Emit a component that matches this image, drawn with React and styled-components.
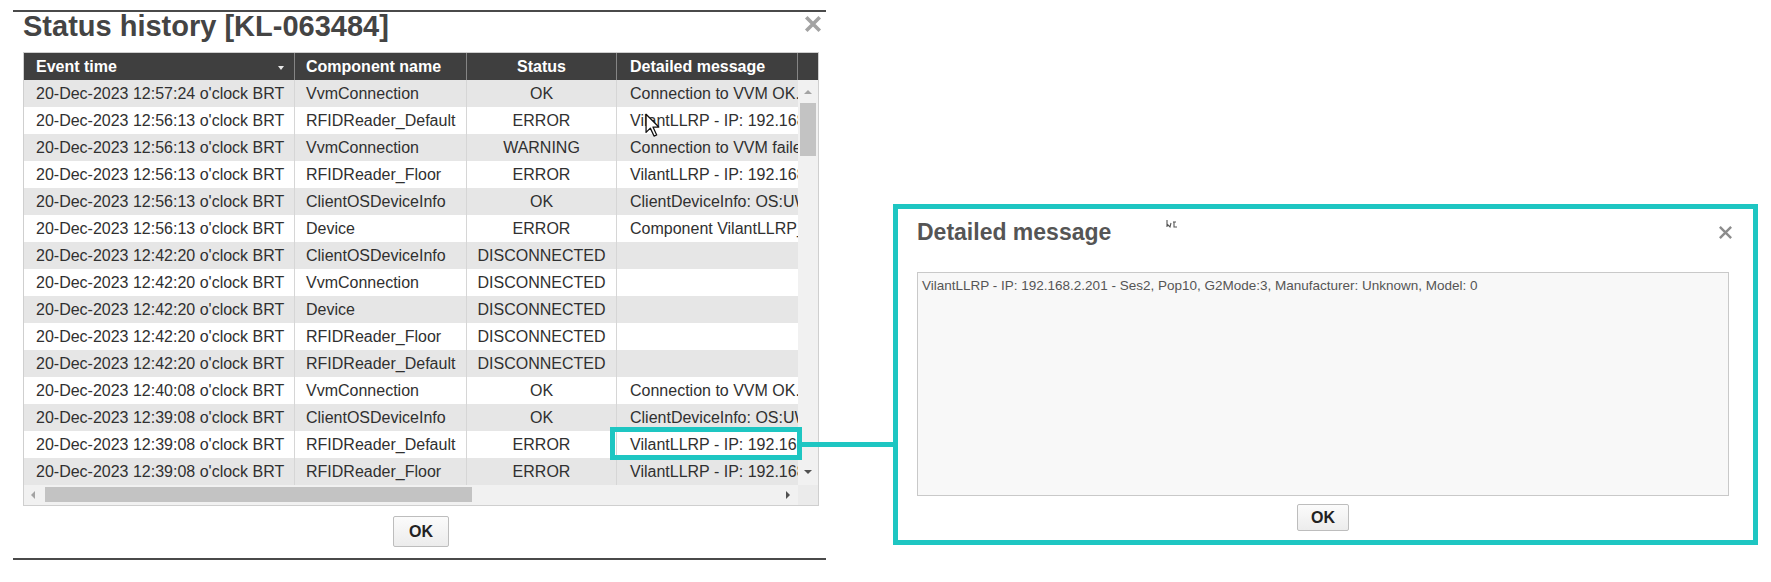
import React from 'react';
import styled, { createGlobalStyle } from 'styled-components';

const Global = createGlobalStyle`
  html, body { margin: 0; padding: 0; background: #ffffff; }
  body { font-family: "Liberation Sans", Arial, sans-serif; }
  * { box-sizing: border-box; }
`;

const CYAN = '#1ec6c2';

const Page = styled.div`
  position: relative;
  width: 1771px;
  height: 582px;
  display: flex;
  align-items: flex-start;
  padding: 10px 0 0 13px;
  overflow: hidden;
`;

const Dialog = styled.section`
  width: 813px;
  border-top: 2px solid #4a4a4a;
  border-bottom: 2px solid #4a4a4a;
  padding: 0 7px 11px 10px;
  display: flex;
  flex-direction: column;
`;

const TitleRow = styled.div`
  height: 28px;
  margin-bottom: 12px;
  display: flex;
  align-items: center;
  justify-content: space-between;
`;

const Title = styled.h1`
  margin: 0;
  font-size: ${p => p.$size}px;
  line-height: 28px;
  font-weight: bold;
  color: ${p => p.$color};
  white-space: nowrap;
`;

const CloseIcon = ({ size, color, stroke }) => (
  <svg width={size} height={size} viewBox="0 0 16 16">
    <path d="M2 2 L14 14 M14 2 L2 14" stroke={color} strokeWidth={stroke} strokeLinecap="butt" />
  </svg>
);

const CloseButton = styled.span`
  display: flex;
  align-items: center;
  justify-content: center;
  margin-right: ${p => p.$right}px;
  margin-top: ${p => p.$top}px;
`;

const Frame = styled.div`
  border: 1px solid #cfcfcf;
  background: #f1f1f1;
  display: flex;
  flex-direction: column;
`;

const COLS = '271px 172px 150px 181px';

const HeaderRow = styled.div`
  display: grid;
  grid-template-columns: ${COLS} 20px;
  height: 27px;
  background: #3f3f3f;
`;

const HeaderCell = styled.div`
  position: relative;
  color: #ffffff;
  font-weight: bold;
  font-size: 16px;
  line-height: 27px;
  padding-left: ${p => (p.$center ? 0 : p.$pad)}px;
  text-align: ${p => (p.$center ? 'center' : 'left')};
  border-right: ${p => (p.$last ? 'none' : '1px solid #858585')};
  white-space: nowrap;
  overflow: hidden;
`;

const SortArrow = styled.span`
  position: absolute;
  right: 10px;
  top: 13px;
  width: 0;
  height: 0;
  border-left: 3.5px solid transparent;
  border-right: 3.5px solid transparent;
  border-top: 4px solid #e8e8e8;
`;

const BodyWrap = styled.div`
  display: flex;
`;

const Rows = styled.div`
  width: 774px;
  display: flex;
  flex-direction: column;
`;

const Row = styled.div`
  display: grid;
  grid-template-columns: ${COLS};
  height: 27px;
  background: ${p => (p.$alt ? '#e6e6e6' : '#ffffff')};
`;

const Cell = styled.div`
  font-size: 16px;
  line-height: 27px;
  color: #303030;
  white-space: nowrap;
  overflow: hidden;
  padding-left: ${p => (p.$center ? 0 : p.$pad)}px;
  text-align: ${p => (p.$center ? 'center' : 'left')};
  border-right: ${p => (p.$last ? 'none' : '1px solid #d6d6d6')};
`;

const VScroll = styled.div`
  position: relative;
  width: 20px;
  background: #f1f1f1;
`;

const VThumb = styled.div`
  position: absolute;
  left: 2px;
  top: 23px;
  width: 16px;
  height: 53px;
  background: #c3c3c3;
`;

const Arrow = styled.span`
  position: absolute;
  width: 0;
  height: 0;
  ${p => p.$dir === 'up' && `
    left: 6px; top: 10px;
    border-left: 4px solid transparent; border-right: 4px solid transparent;
    border-bottom: 4px solid #a3a3a3;
  `}
  ${p => p.$dir === 'down' && `
    left: 6px; bottom: 11px;
    border-left: 4px solid transparent; border-right: 4px solid transparent;
    border-top: 4px solid #505050;
  `}
  ${p => p.$dir === 'left' && `
    left: 7px; top: 6px;
    border-top: 4px solid transparent; border-bottom: 4px solid transparent;
    border-right: 4px solid #a3a3a3;
  `}
  ${p => p.$dir === 'right' && `
    right: 8px; top: 6px;
    border-top: 4px solid transparent; border-bottom: 4px solid transparent;
    border-left: 4px solid #505050;
  `}
`;

const HScrollRow = styled.div`
  display: flex;
  height: 20px;
`;

const HScroll = styled.div`
  position: relative;
  width: 774px;
  background: #f1f1f1;
`;

const HThumb = styled.div`
  position: absolute;
  left: 21px;
  top: 2px;
  width: 427px;
  height: 15px;
  background: #c3c3c3;
`;

const Corner = styled.div`
  width: 20px;
  background: #ebebeb;
`;

const Footer = styled.div`
  display: flex;
  justify-content: center;
  padding-top: ${p => p.$top}px;
`;

const OkButton = styled.button`
  width: ${p => p.$w}px;
  height: ${p => p.$h}px;
  border: 1px solid #bdbdbd;
  border-radius: 2px;
  background: linear-gradient(#fbfbfb, #ececec);
  font-family: "Liberation Sans", Arial, sans-serif;
  font-weight: bold;
  font-size: 16px;
  color: #222222;
  padding: 0;
`;

const Highlight = styled.div`
  position: absolute;
  left: 610px;
  top: 427px;
  width: 192px;
  height: 33px;
  border: 5px solid ${CYAN};
`;

const Connector = styled.div`
  position: absolute;
  left: 802px;
  top: 442px;
  width: 92px;
  height: 5px;
  background: ${CYAN};
`;

const Callout = styled.section`
  margin: 194px 0 0 67px;
  width: 865px;
  height: 341px;
  border: 5px solid ${CYAN};
  background: #ffffff;
  padding: 9px 24px 9px 19px;
  display: flex;
  flex-direction: column;
`;

const CalloutHeader = styled.div`
  position: relative;
  height: 28px;
  margin-bottom: 26px;
  display: flex;
  align-items: center;
  justify-content: space-between;
`;

const MessageBox = styled.div`
  height: 224px;
  border: 1px solid #c9c9c9;
  background: #f8f8f8;
  padding: 5px 4px;
  font-size: 13.5px;
  line-height: 15px;
  color: #555555;
  white-space: nowrap;
  overflow: hidden;
`;

const Pointer = styled.svg`
  position: absolute;
  left: ${p => p.$x}px;
  top: ${p => p.$y}px;
  pointer-events: none;
`;

const rows = [
  ['12:57:24', 'VvmConnection', 'OK', 'Connection to VVM OK.'],
  ['12:56:13', 'RFIDReader_Default', 'ERROR', 'VilantLLRP - IP: 192.168.2.201 - Ses2, Pop10'],
  ['12:56:13', 'VvmConnection', 'WARNING', 'Connection to VVM failed'],
  ['12:56:13', 'RFIDReader_Floor', 'ERROR', 'VilantLLRP - IP: 192.168.2.202 - Ses2, Pop10'],
  ['12:56:13', 'ClientOSDeviceInfo', 'OK', 'ClientDeviceInfo: OS:UWP'],
  ['12:56:13', 'Device', 'ERROR', 'Component VilantLLRP_Default'],
  ['12:42:20', 'ClientOSDeviceInfo', 'DISCONNECTED', ''],
  ['12:42:20', 'VvmConnection', 'DISCONNECTED', ''],
  ['12:42:20', 'Device', 'DISCONNECTED', ''],
  ['12:42:20', 'RFIDReader_Floor', 'DISCONNECTED', ''],
  ['12:42:20', 'RFIDReader_Default', 'DISCONNECTED', ''],
  ['12:40:08', 'VvmConnection', 'OK', 'Connection to VVM OK.'],
  ['12:39:08', 'ClientOSDeviceInfo', 'OK', 'ClientDeviceInfo: OS:UWP'],
  ['12:39:08', 'RFIDReader_Default', 'ERROR', 'VilantLLRP - IP: 192.168.2.201 - Ses2, Pop10'],
  ['12:39:08', 'RFIDReader_Floor', 'ERROR', 'VilantLLRP - IP: 192.168.2.202 - Ses2, Pop10'],
];

export default function App() {
  return (
    <>
      <Global />
      <Page>
        <Dialog>
          <TitleRow>
            <Title $size={29} $color="#444444">Status history [KL-063484]</Title>
            <CloseButton $right={-3} $top={-5}>
              <CloseIcon size={18} color="#a3a3a3" stroke={3.2} />
            </CloseButton>
          </TitleRow>
          <Frame>
            <HeaderRow>
              <HeaderCell $pad={12}>Event time<SortArrow /></HeaderCell>
              <HeaderCell $pad={11}>Component name</HeaderCell>
              <HeaderCell $center>Status</HeaderCell>
              <HeaderCell $pad={13}>Detailed message</HeaderCell>
              <HeaderCell $last />
            </HeaderRow>
            <BodyWrap>
              <Rows>
                {rows.map((r, i) => (
                  <Row key={i} $alt={i % 2 === 0}>
                    <Cell $pad={12}>20-Dec-2023 {r[0]} o'clock BRT</Cell>
                    <Cell $pad={11}>{r[1]}</Cell>
                    <Cell $center>{r[2]}</Cell>
                    <Cell $pad={13} $last>{r[3]}</Cell>
                  </Row>
                ))}
              </Rows>
              <VScroll>
                <Arrow $dir="up" />
                <VThumb />
                <Arrow $dir="down" />
              </VScroll>
            </BodyWrap>
            <HScrollRow>
              <HScroll>
                <Arrow $dir="left" />
                <HThumb />
                <Arrow $dir="right" />
              </HScroll>
              <Corner />
            </HScrollRow>
          </Frame>
          <Footer $top={10}>
            <OkButton $w={56} $h={31}>OK</OkButton>
          </Footer>
        </Dialog>

        <Callout>
          <CalloutHeader>
            <Title $size={23} $color="#555555">Detailed message</Title>
            <CloseButton $right={-4} $top={0}>
              <CloseIcon size={15} color="#8c8c8c" stroke={2.6} />
            </CloseButton>
          </CalloutHeader>
          <MessageBox>
            VilantLLRP - IP: 192.168.2.201 - Ses2, Pop10, G2Mode:3, Manufacturer: Unknown, Model: 0
          </MessageBox>
          <Footer $top={8}>
            <OkButton $w={52} $h={27}>OK</OkButton>
          </Footer>
        </Callout>

        <Highlight />
        <Connector />

        <Pointer $x={645} $y={113} width="17" height="26" viewBox="0 0 16 24">
          <path d="M1 1 L1 18 L5 14 L8.5 21.5 L11 20.5 L7.5 13 L13 13 Z" fill="#ffffff" stroke="#111111" strokeWidth="1.2" strokeLinejoin="round" />
        </Pointer>
        <Pointer $x={1166} $y={219} width="12" height="10" viewBox="0 0 12 10">
          <path d="M1 1 L1 8 M1 5 L4 8 L5 4 M7 3 L10 3 M8 3 L8 8 L11 8" fill="none" stroke="#555555" strokeWidth="1.1" />
        </Pointer>
      </Page>
    </>
  );
}
